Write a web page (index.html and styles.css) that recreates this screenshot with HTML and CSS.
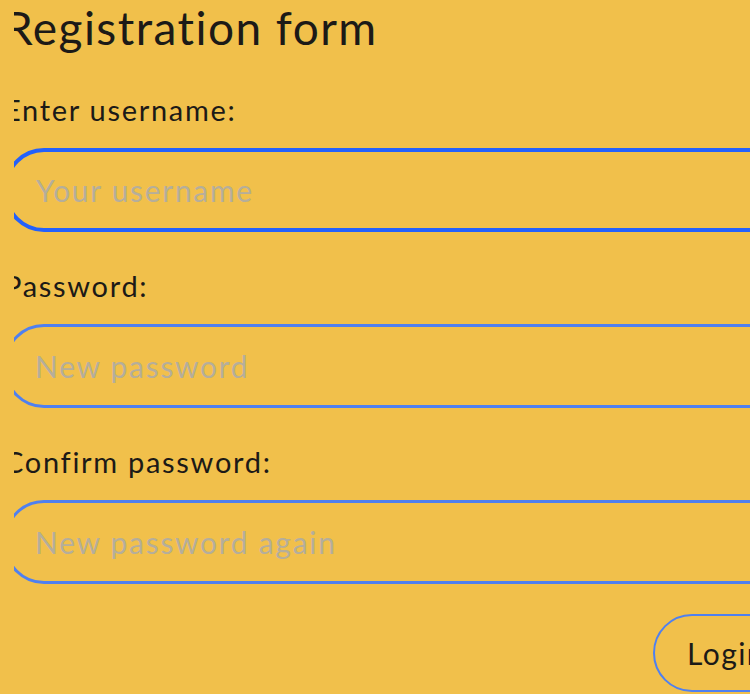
FILE: index.html
```html
<!DOCTYPE html>
<html lang="en">
<head>
<meta charset="utf-8">
<title>Registration form</title>
<link rel="stylesheet" href="styles.css">
</head>
<body>
<div class="clip">
  <form class="form">
    <h1 class="title">Registration form</h1>
    <label class="label" for="username">Enter username:</label>
    <input class="field field--active" id="username" type="text" placeholder="Your username">
    <label class="label" for="password">Password:</label>
    <input class="field" id="password" type="password" placeholder="New password">
    <label class="label" for="confirm">Confirm password:</label>
    <input class="field" id="confirm" type="password" placeholder="New password again">
    <div class="actions">
      <button class="btn" type="button">Login</button>
    </div>
  </form>
</div>
</body>
</html>
```

FILE: styles.css
```css
html, body {
  margin: 0;
  padding: 0;
  overflow: hidden;
  background: #f1c04b;
}

body {
  font-family: "Lato", "Noto Sans", sans-serif;
  font-variant-ligatures: none;
  color: #1c1a17;
  height: 694px;
}

.clip {
  margin-left: 14px;
  overflow: hidden;
  height: 694px;
}

.form {
  margin-left: -10px;
  width: 900px;
  display: flex;
  flex-direction: column;
  align-items: flex-start;
}

.title {
  margin: 0;
  font-size: 46px;
  font-weight: 400;
  line-height: 56px;
  letter-spacing: 1.45px;
}

.label {
  font-size: 29px;
  line-height: 36px;
  margin-top: 36px;
  letter-spacing: 1.7px;
}

.field {
  box-sizing: border-box;
  width: 100%;
  height: 84px;
  margin-top: 20px;
  border: 3px solid #4f80f0;
  border-radius: 40px;
  background: transparent;
  padding: 0 28px;
  font-family: inherit;
  font-variant-ligatures: none;
  font-size: 30px;
  letter-spacing: 1.7px;
  color: #1c1a17;
  outline: none;
}

.field--active {
  border: 4px solid #2461fb;
}

.field::placeholder {
  color: #b5ae9b;
}

.actions {
  align-self: stretch;
  display: flex;
  margin-top: 30px;
  padding-left: 649px;
}

.btn {
  box-sizing: border-box;
  height: 78px;
  padding: 0 32px;
  border: 2px solid #4f80f0;
  border-radius: 40px;
  background: transparent;
  font-family: inherit;
  font-size: 30px;
  letter-spacing: 1.45px;
  color: #1c1a17;
}
```
